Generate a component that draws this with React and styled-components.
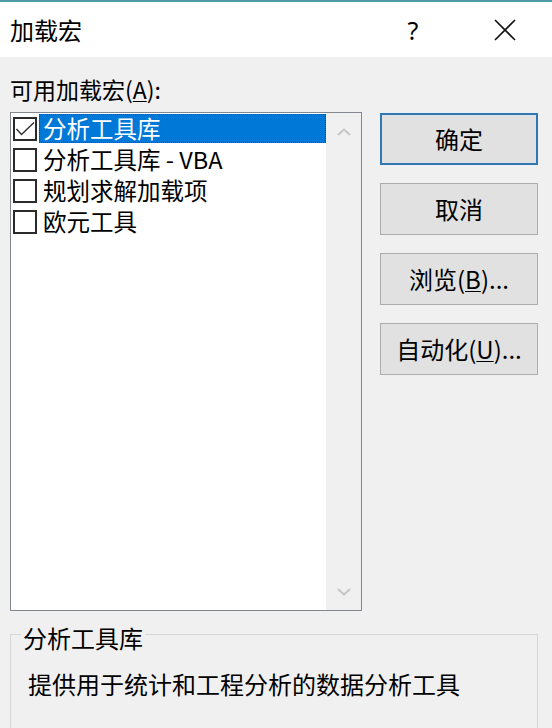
import React from 'react';
import styled, { createGlobalStyle } from 'styled-components';

const GlobalStyle = createGlobalStyle`
    html, body {
        margin: 0;
        padding: 0;
        background: #f0f0f0;
    }
`;

const Window = styled.div`
    width: 552px;
    height: 728px;
    overflow: hidden;
    display: flex;
    flex-direction: column;
    background: #f0f0f0;
    border-top: 2px solid #4e9ba8;
    box-sizing: border-box;
    font-family: 'Noto Sans CJK SC', 'Microsoft YaHei', sans-serif;
    color: #000;
`;

const TitleBar = styled.header`
    height: 55px;
    flex: none;
    display: flex;
    align-items: center;
    background: #fff;
    padding-left: 10px;
    padding-right: 1px;
`;

const Title = styled.h1`
    margin: 0;
    font-size: 24px;
    font-weight: 400;
    line-height: 30px;
    flex: 1;
`;

const TitleButton = styled.button`
    width: 92px;
    height: 55px;
    border: 0;
    background: transparent;
    padding: 0;
    display: flex;
    align-items: center;
    justify-content: center;
    font-family: 'Noto Sans', sans-serif;
    font-size: 25px;
    color: #000;
`;

const Body = styled.main`
    padding: 0 10px;
    display: flex;
    flex-direction: column;
`;

const Label = styled.div`
    margin-top: 17px;
    font-size: 23px;
    line-height: 30px;
`;

const U = styled.span`
    text-decoration: underline;
    text-underline-offset: 2px;
    text-decoration-thickness: 1px;
`;

const MainRow = styled.div`
    margin-top: 8px;
    display: flex;
    gap: 18px;
    align-items: flex-start;
`;

const ListBox = styled.div`
    width: 352px;
    height: 499px;
    box-sizing: border-box;
    border: 1px solid #828790;
    background: #fff;
    display: flex;
`;

const Items = styled.ul`
    list-style: none;
    margin: 0;
    padding: 0;
    flex: 1;
`;

const Item = styled.li`
    height: 31px;
    display: flex;
    align-items: center;
    padding-left: 2px;
`;

const Box = styled.span`
    width: 24px;
    height: 24px;
    box-sizing: border-box;
    border: 2px solid #2b2b2b;
    flex: none;
    display: flex;
    align-items: center;
    justify-content: center;
    background: #fff;
`;

const ItemText = styled.span`
    flex: 1;
    margin-left: 2px;
    height: 29px;
    box-sizing: border-box;
    display: flex;
    align-items: center;
    padding-left: 3px;
    font-size: 23.5px;
    line-height: 29px;
    white-space: nowrap;
    background: ${p => (p.$selected ? '#0078d7' : 'transparent')};
    color: ${p => (p.$selected ? '#fff' : '#000')};
    border: 1px dotted ${p => (p.$selected ? '#0a4f8c' : 'transparent')};
`;

const ScrollBar = styled.div`
    width: 35px;
    flex: none;
    background: #f0f0f0;
    display: flex;
    flex-direction: column;
    justify-content: space-between;
`;

const ScrollArrow = styled.div`
    height: 37px;
    display: flex;
    align-items: center;
    justify-content: center;
`;

const Buttons = styled.div`
    margin-top: 1px;
    display: flex;
    flex-direction: column;
    gap: 18px;
`;

const Button = styled.button`
    width: 158px;
    height: 52px;
    box-sizing: border-box;
    background: #e1e1e1;
    border: ${p => (p.$default ? '2px solid #2f78b4' : '1px solid #adadad')};
    font-family: inherit;
    font-size: 24px;
    color: #000;
    padding: 0;
    line-height: 30px;
`;

const Group = styled.fieldset`
    margin: 7px 0 0 0;
    padding: 0;
    width: 528px;
    height: 140px;
    box-sizing: border-box;
    border: 1px solid #d6d6d6;
    min-width: 0;
`;

const Legend = styled.legend`
    margin-left: 10px;
    padding: 8px 2px 0 2px;
    font-size: 24px;
    line-height: 24px;
`;

const Description = styled.p`
    margin: 19px 0 0 17px;
    font-size: 24px;
    line-height: 30px;
`;

const Chevron = ({ up }) => (
    <svg width="14" height="8" viewBox="0 0 14 8">
        <path
            d={up ? 'M1 7 L7 1.5 L13 7' : 'M1 1 L7 6.5 L13 1'}
            fill="none"
            stroke="#c4c4c4"
            strokeWidth="2"
        />
    </svg>
);

const Check = () => (
    <svg width="20" height="20" viewBox="0 0 20 20">
        <path d="M1.5 10 L6.5 15.5 L19 3.5" fill="none" stroke="#333" strokeWidth="1.5" />
    </svg>
);

const addins = [
    { name: '分析工具库', checked: true },
    { name: '分析工具库 - VBA' },
    { name: '规划求解加载项' },
    { name: '欧元工具' },
];

const App = () => {
    return (
        <Window>
            <GlobalStyle />
            <TitleBar>
                <Title>加载宏</Title>
                <TitleButton>?</TitleButton>
                <TitleButton>
                    <svg width="22" height="22" viewBox="0 0 22 22">
                        <path d="M1 1 L21 21 M21 1 L1 21" stroke="#111" strokeWidth="1.6" />
                    </svg>
                </TitleButton>
            </TitleBar>
            <Body>
                <Label>
                    可用加载宏(<U>A</U>):
                </Label>
                <MainRow>
                    <ListBox>
                        <Items>
                            {addins.map((a, i) => (
                                <Item key={a.name}>
                                    <Box>{a.checked && <Check />}</Box>
                                    <ItemText $selected={i === 0}>{a.name}</ItemText>
                                </Item>
                            ))}
                        </Items>
                        <ScrollBar>
                            <ScrollArrow><Chevron up /></ScrollArrow>
                            <ScrollArrow><Chevron /></ScrollArrow>
                        </ScrollBar>
                    </ListBox>
                    <Buttons>
                        <Button $default>确定</Button>
                        <Button>取消</Button>
                        <Button>浏览(<U>B</U>)...</Button>
                        <Button>自动化(<U>U</U>)...</Button>
                    </Buttons>
                </MainRow>
                <Group>
                    <Legend>分析工具库</Legend>
                    <Description>提供用于统计和工程分析的数据分析工具</Description>
                </Group>
            </Body>
        </Window>
    );
};

export default App;
